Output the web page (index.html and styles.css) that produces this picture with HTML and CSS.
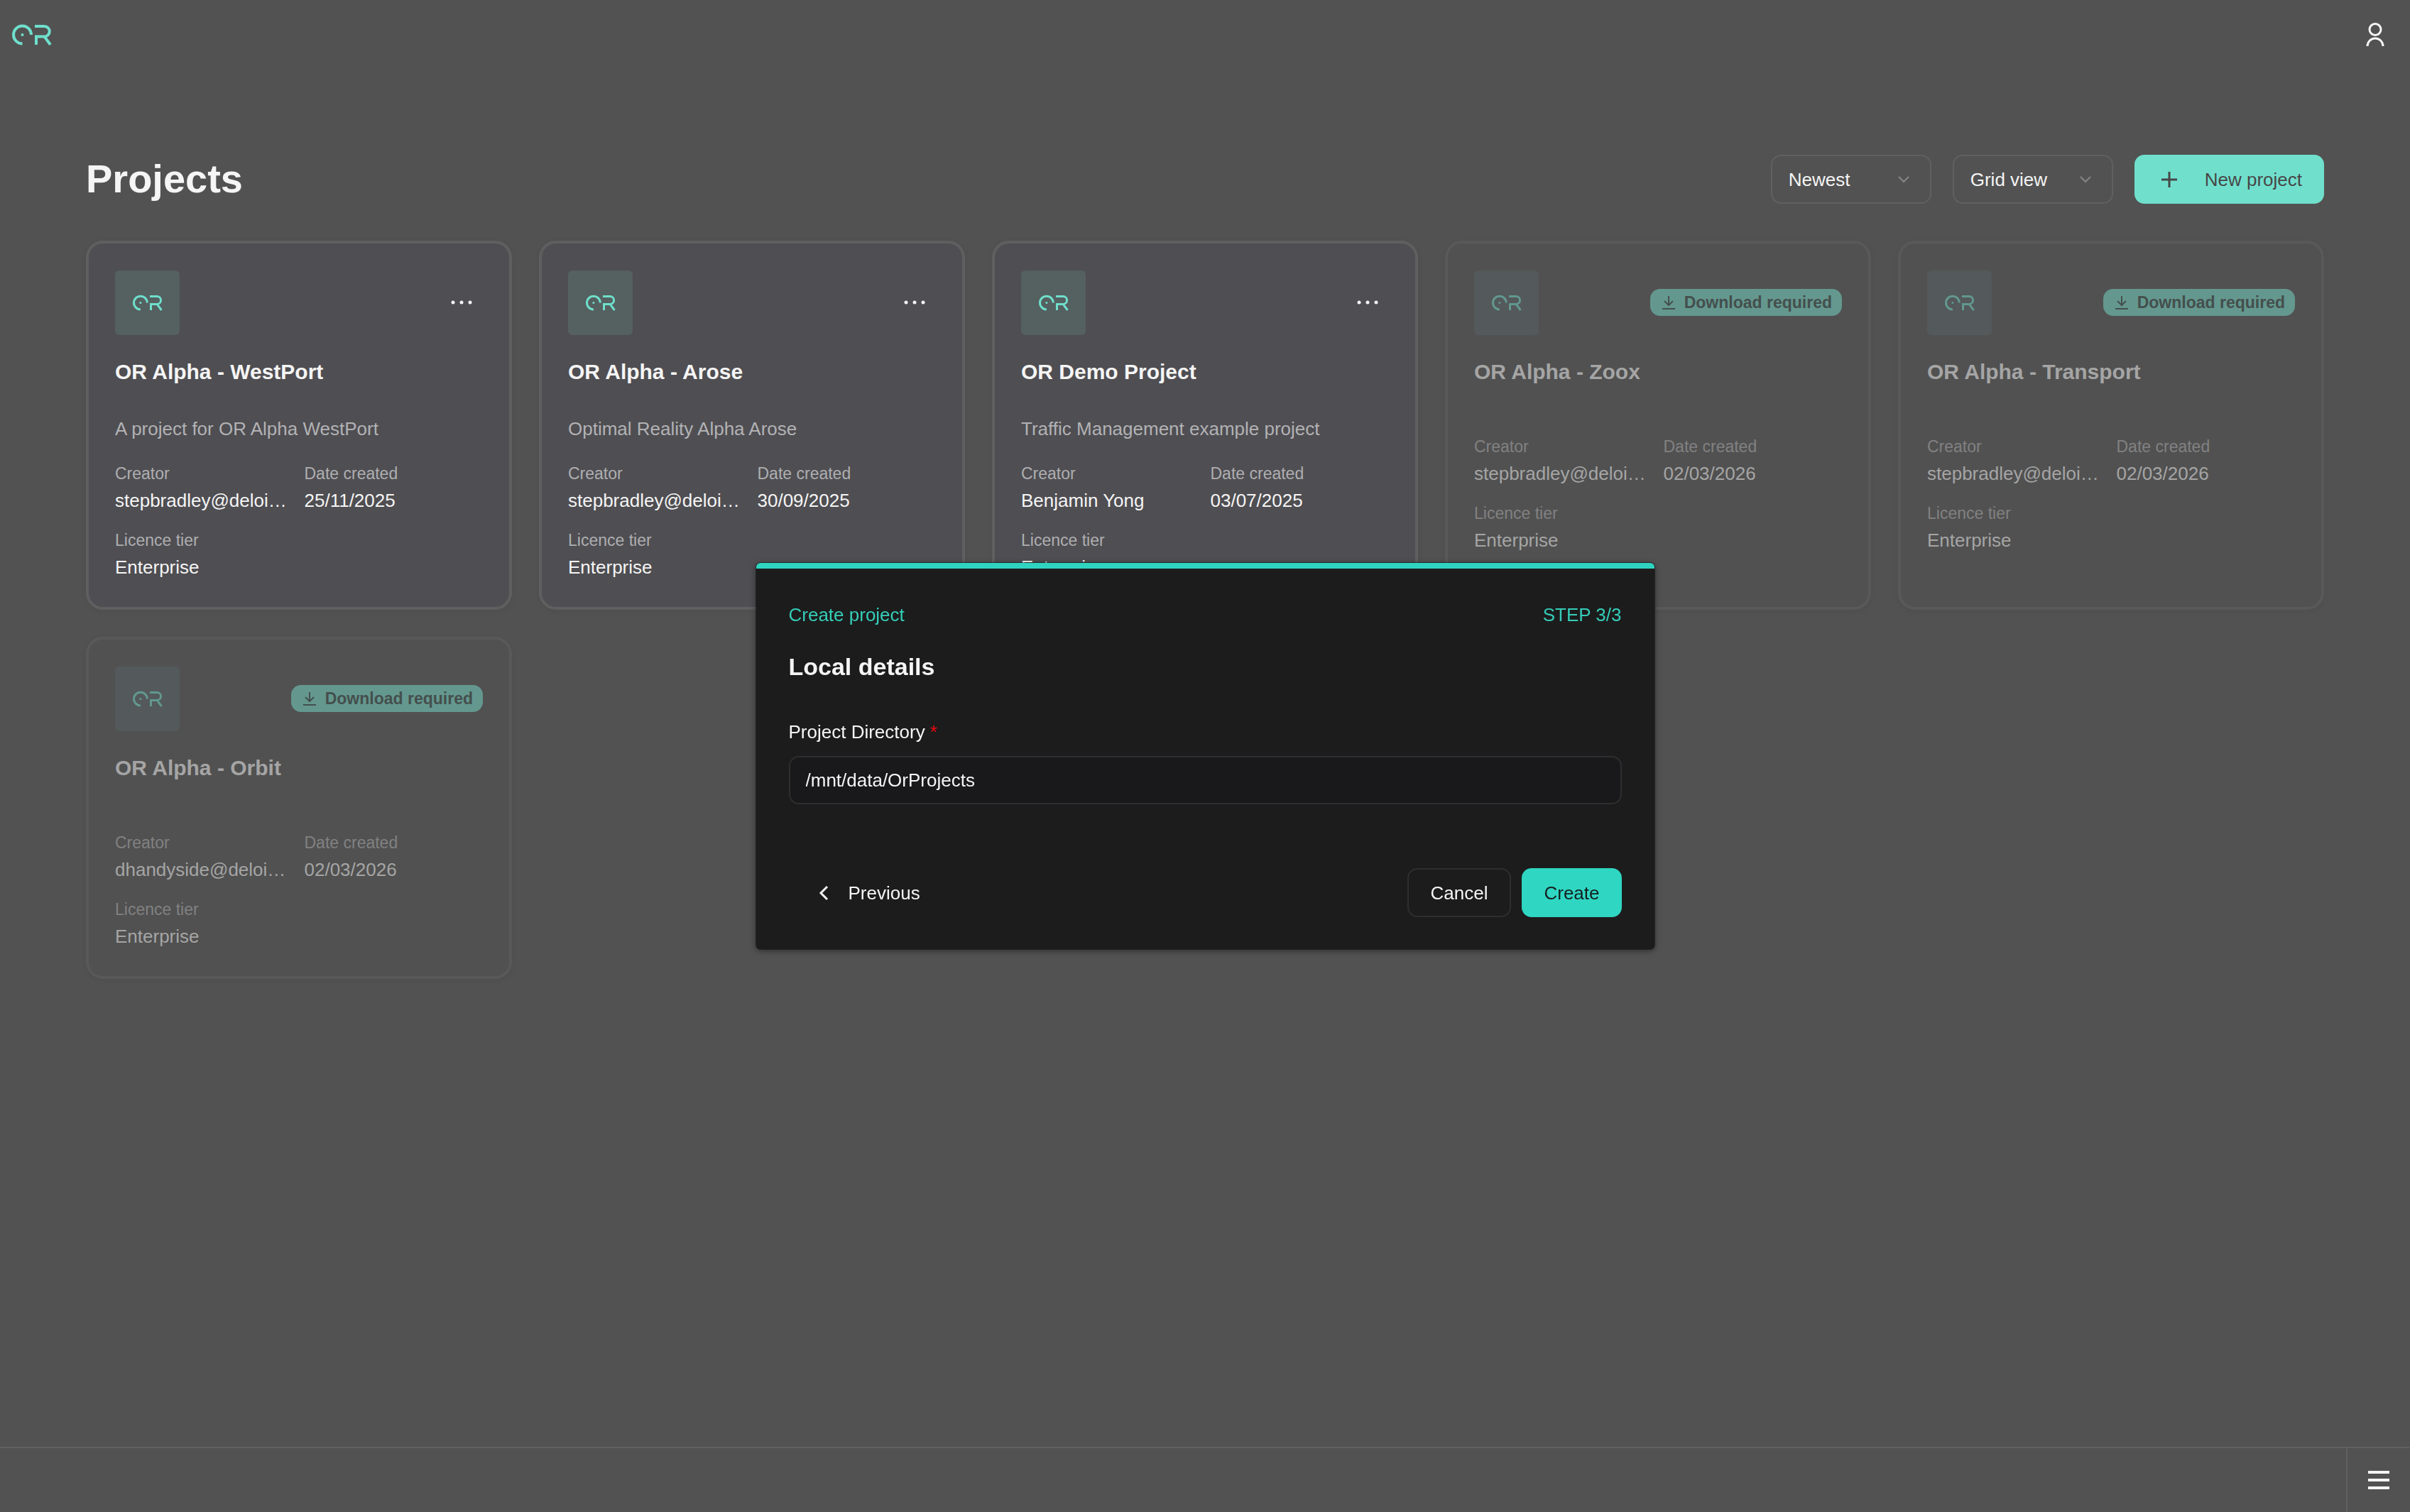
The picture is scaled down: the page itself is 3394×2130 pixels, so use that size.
FILE: index.html
```html
<!DOCTYPE html>
<html lang="en">
<head>
<meta charset="utf-8">
<meta name="viewport" content="width=device-width, initial-scale=1">
<title>Projects</title>
<link rel="stylesheet" href="styles.css">
</head>
<body>
<svg class="sprite" aria-hidden="true">
  <symbol id="logo" viewBox="0 0 56 30">
    <path d="M14.500 27.500A12.500 12.500 0 1 1 27 15" fill="none" stroke="currentColor" stroke-width="4"/>
    <circle cx="14.500" cy="15" r="2" fill="currentColor"/>
    <path d="M32 3H45.500A6.500 6.500 0 0 1 45.500 17.500H34V29M45.500 17.500L54 29" fill="none" stroke="currentColor" stroke-width="4"/>
  </symbol>
  <symbol id="download" viewBox="0 0 18 20">
    <path d="M9 1V14M3 8L9 14L15 8M0 19H18" fill="none" stroke="currentColor" stroke-width="2"/>
  </symbol>
  <symbol id="dots" viewBox="0 0 32 8">
    <circle cx="4" cy="4" r="2.500" fill="currentColor"/><circle cx="16" cy="4" r="2.500" fill="currentColor"/><circle cx="28" cy="4" r="2.500" fill="currentColor"/>
  </symbol>
</svg>
<div class="app">
  <header class="topbar">
    <a class="brand" href="#" aria-label="Home"><svg class="brand-logo"><use href="#logo"/></svg></a>
    <button class="icon-button" type="button" aria-label="Account">
      <svg class="user-icon" viewBox="0 0 26 34"><circle cx="13" cy="9.500" r="8" fill="none" stroke="currentColor" stroke-width="3"/><path d="M2 33A11 11 0 0 1 24 33" fill="none" stroke="currentColor" stroke-width="3"/></svg>
    </button>
  </header>
  <main class="content">
    <div class="page-head">
      <h1 class="page-title">Projects</h1>
      <div class="toolbar">
        <select class="select" aria-label="Sort order"><option>Newest</option></select>
        <select class="select" aria-label="View"><option>Grid view</option></select>
        <button class="button new-project" type="button"><svg class="plus-icon" viewBox="0 0 24 24"><path d="M12 1V23M1 12H23" stroke="currentColor" stroke-width="3"/></svg>New project</button>
      </div>
    </div>
    <div class="grid">
      <article class="card">
        <div class="card-head"><span class="tile"><svg class="tile-logo"><use href="#logo"/></svg></span><button class="more" type="button" aria-label="Project menu"><svg class="dots-icon"><use href="#dots"/></svg></button></div>
        <h2 class="card-title">OR Alpha - WestPort</h2>
        <p class="card-text">A project for OR Alpha WestPort</p>
        <dl class="facts"><div><dt>Creator</dt><dd>stepbradley@deloi…</dd></div><div><dt>Date created</dt><dd>25/11/2025</dd></div><div><dt>Licence tier</dt><dd>Enterprise</dd></div></dl>
      </article>
      <article class="card">
        <div class="card-head"><span class="tile"><svg class="tile-logo"><use href="#logo"/></svg></span><button class="more" type="button" aria-label="Project menu"><svg class="dots-icon"><use href="#dots"/></svg></button></div>
        <h2 class="card-title">OR Alpha - Arose</h2>
        <p class="card-text">Optimal Reality Alpha Arose</p>
        <dl class="facts"><div><dt>Creator</dt><dd>stepbradley@deloi…</dd></div><div><dt>Date created</dt><dd>30/09/2025</dd></div><div><dt>Licence tier</dt><dd>Enterprise</dd></div></dl>
      </article>
      <article class="card">
        <div class="card-head"><span class="tile"><svg class="tile-logo"><use href="#logo"/></svg></span><button class="more" type="button" aria-label="Project menu"><svg class="dots-icon"><use href="#dots"/></svg></button></div>
        <h2 class="card-title">OR Demo Project</h2>
        <p class="card-text">Traffic Management example project</p>
        <dl class="facts"><div><dt>Creator</dt><dd>Benjamin Yong</dd></div><div><dt>Date created</dt><dd>03/07/2025</dd></div><div><dt>Licence tier</dt><dd>Enterprise</dd></div></dl>
      </article>
      <article class="card remote">
        <div class="card-head"><span class="tile"><svg class="tile-logo"><use href="#logo"/></svg></span><span class="badge"><svg class="badge-icon"><use href="#download"/></svg>Download required</span></div>
        <h2 class="card-title">OR Alpha - Zoox</h2>
        <p class="card-text"></p>
        <dl class="facts"><div><dt>Creator</dt><dd>stepbradley@deloi…</dd></div><div><dt>Date created</dt><dd>02/03/2026</dd></div><div><dt>Licence tier</dt><dd>Enterprise</dd></div></dl>
      </article>
      <article class="card remote">
        <div class="card-head"><span class="tile"><svg class="tile-logo"><use href="#logo"/></svg></span><span class="badge"><svg class="badge-icon"><use href="#download"/></svg>Download required</span></div>
        <h2 class="card-title">OR Alpha - Transport</h2>
        <p class="card-text"></p>
        <dl class="facts"><div><dt>Creator</dt><dd>stepbradley@deloi…</dd></div><div><dt>Date created</dt><dd>02/03/2026</dd></div><div><dt>Licence tier</dt><dd>Enterprise</dd></div></dl>
      </article>
      <article class="card remote">
        <div class="card-head"><span class="tile"><svg class="tile-logo"><use href="#logo"/></svg></span><span class="badge"><svg class="badge-icon"><use href="#download"/></svg>Download required</span></div>
        <h2 class="card-title">OR Alpha - Orbit</h2>
        <p class="card-text"></p>
        <dl class="facts"><div><dt>Creator</dt><dd>dhandyside@deloi…</dd></div><div><dt>Date created</dt><dd>02/03/2026</dd></div><div><dt>Licence tier</dt><dd>Enterprise</dd></div></dl>
      </article>
    </div>
  </main>
  <footer class="bottombar">
    <button class="menu-button" type="button" aria-label="Menu"><svg class="menu-icon" viewBox="0 0 30 26"><path d="M0 2H30M0 13H30M0 24H30" stroke="currentColor" stroke-width="4"/></svg></button>
  </footer>
</div>
<div class="overlay">
  <form class="dialog" role="dialog" aria-modal="true" aria-labelledby="dialog-title">
    <div class="dialog-top"><span>Create project</span><span>STEP 3/3</span></div>
    <h2 class="dialog-title" id="dialog-title">Local details</h2>
    <label class="field-label" for="directory">Project Directory <span class="required">*</span></label>
    <input class="field" id="directory" type="text" value="/mnt/data/OrProjects">
    <div class="actions">
      <button class="button previous" type="button"><svg class="back-icon" viewBox="0 0 14 22"><path d="M12 2L3 11L12 20" fill="none" stroke="currentColor" stroke-width="3"/></svg>Previous</button>
      <button class="button cancel" type="button">Cancel</button>
      <button class="button create" type="submit">Create</button>
    </div>
  </form>
</div>
</body>
</html>
```
FILE: styles.css
```css
* { box-sizing: border-box; }

body {
  margin: 0;
  background: #525252;
  color: #f5f5f5;
  font: 26px/38px "Liberation Sans", Arial, sans-serif;
}

h1, h2, p, dl, dd { margin: 0; }

button, select, input { font: inherit; color: inherit; }

button { padding: 0; border: 0; background: none; }

svg { display: block; flex: none; }

.sprite { position: absolute; width: 0; height: 0; }

.app { display: flex; flex-direction: column; min-height: 100vh; }

/* Top bar */
.topbar {
  display: flex;
  align-items: center;
  justify-content: space-between;
  height: 98px;
  padding: 0 36px 0 17px;
}

.brand { color: #6fdfcc; }
.brand-logo { width: 56px; height: 30px; }
.user-icon { width: 26px; height: 34px; }

/* Project list */
.content { flex: 1; padding: 120px 121px 60px; }

.page-head {
  display: flex;
  align-items: flex-start;
  justify-content: space-between;
  margin-bottom: 52px;
}

.page-title { font-size: 56px; line-height: 68px; }

.toolbar { display: flex; gap: 30px; }

.button, .select {
  display: flex;
  align-items: center;
  justify-content: center;
  height: 69px;
  border-radius: 14px;
}

.select {
  appearance: none;
  width: 226px;
  padding: 0 23px;
  border: 2px solid #606060;
  background: url("data:image/svg+xml,%3Csvg xmlns='http://www.w3.org/2000/svg' viewBox='0 0 16 10'%3E%3Cpath d='M1 1L8 8L15 1' fill='none' stroke='%23878787' stroke-width='2'/%3E%3C/svg%3E") right 29px center / 16px 10px no-repeat;
}

.new-project {
  gap: 38px;
  padding: 0 31px 0 37px;
  background: #70e0cd;
  color: #474747;
}

.plus-icon { width: 24px; height: 24px; }

.grid {
  display: grid;
  grid-template-columns: repeat(5, minmax(0, 1fr));
  gap: 38px;
}

.card {
  display: flex;
  flex-direction: column;
  padding: 37px;
  border: 4px solid #5f5f60;
  border-radius: 24px;
  background: #4f4e52;
  box-shadow: 0 2px 8px rgb(0 0 0 / 6%);
}

.card-head {
  display: flex;
  align-items: center;
  justify-content: space-between;
  height: 92px;
}

.tile {
  display: grid;
  place-items: center;
  width: 91px;
  height: 91px;
  border-radius: 6px;
  background: #556060;
  color: #6fdfcc;
}

.tile-logo { width: 42px; height: 23px; }

.more { padding: 20px 14px; }
.dots-icon { width: 32px; height: 8px; }

.card-title {
  margin: 29px 0 39px;
  font-size: 30px;
  line-height: 45px;
}

.card-text { margin-bottom: 29px; color: #b2b2b5; }

.facts {
  display: grid;
  grid-template-columns: repeat(2, minmax(0, 1fr));
  gap: 22px 15px;
}

dt {
  margin-bottom: 4px;
  color: #aeaeb1;
  font-size: 23px;
  line-height: 30px;
}

dd {
  overflow: hidden;
  text-overflow: ellipsis;
  white-space: nowrap;
}

.remote {
  border-color: #595959;
  background: #515151;
  color: #a5a5a5;
}

.remote dt { color: #818182; }
.remote .tile { background: #54595b; color: #62988f; }

.badge {
  display: flex;
  align-items: center;
  gap: 13px;
  height: 38px;
  padding: 0 14px 0 17px;
  border-radius: 14px;
  background: #64988f;
  color: #444f4d;
  font-size: 23px;
  font-weight: bold;
}

.badge-icon { width: 18px; height: 20px; }

/* Bottom bar */
.bottombar {
  display: flex;
  justify-content: flex-end;
  height: 92px;
  border-top: 2px solid #606060;
}

.menu-button {
  display: grid;
  place-items: center;
  width: 90px;
  border-left: 2px solid #606060;
}

.menu-icon { width: 30px; height: 26px; }

/* Dialog */
.overlay {
  position: fixed;
  inset: 0;
  display: grid;
  place-items: center;
}

.dialog {
  width: 1265px;
  max-width: 100%;
  padding: 46px 46px 45px;
  border-top: 8px solid #2fd4c0;
  border-radius: 6px;
  background: #1c1c1c;
  box-shadow: 0 0 0 1px rgb(0 0 0 / 40%), 0 2px 8px rgb(0 0 0 / 50%);
}

.dialog-top {
  display: flex;
  justify-content: space-between;
  color: #35cdb9;
}

.dialog-title {
  margin: 32px 0 50px;
  font-size: 34px;
  line-height: 45px;
}

.field-label { display: block; margin-bottom: 15px; }
.required { color: #f00810; }

.field {
  display: block;
  width: 100%;
  height: 68px;
  padding: 0 22px;
  border: 2px solid #2e2e2e;
  border-radius: 14px;
  background: #19191c;
}

.actions { display: flex; gap: 15px; margin-top: 90px; }

.previous {
  gap: 28px;
  margin-right: auto;
  padding: 0 42px;
}

.back-icon { width: 14px; height: 22px; }

.cancel { padding: 0 31px; border: 2px solid #2e2e2e; }
.create { padding: 0 31px; background: #2fd6c2; color: #14201f; }
```
